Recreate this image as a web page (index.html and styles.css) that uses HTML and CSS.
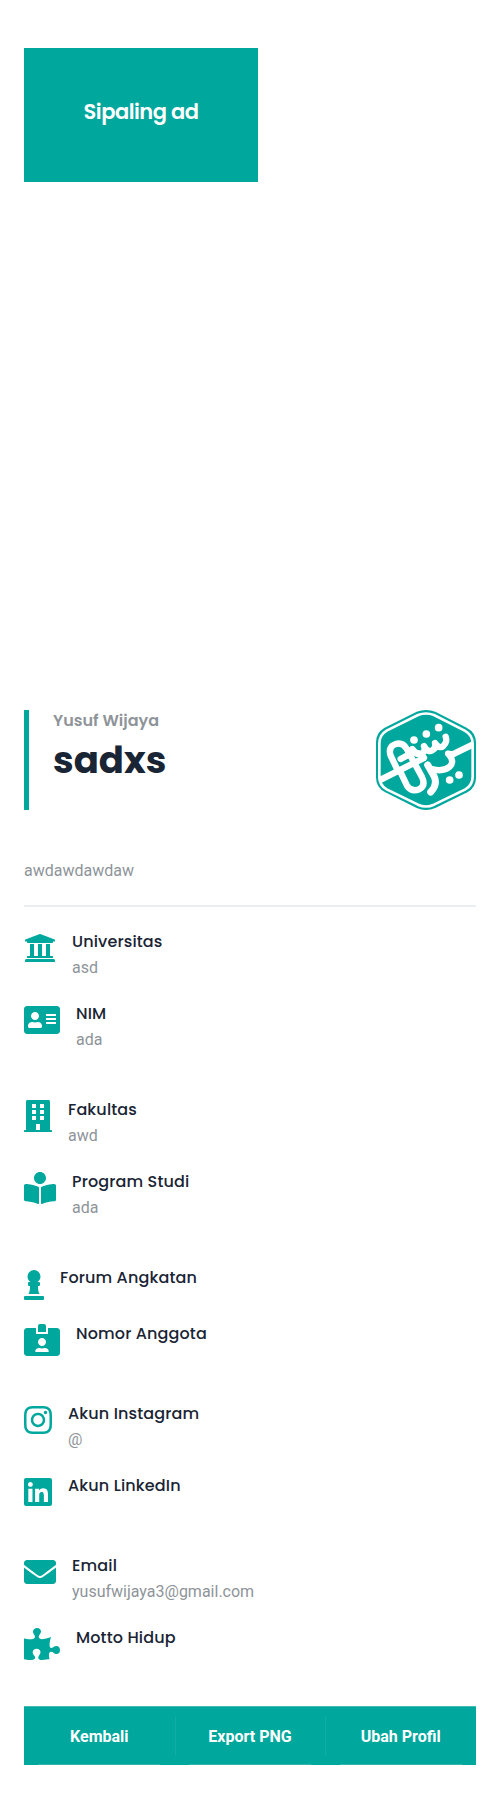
FILE: index.html
```html
<!DOCTYPE html>
<html lang="id"><head><meta charset="utf-8"><title>Profil</title><link rel="stylesheet" href="styles.css"></head>
<body>
<main class="page">
<div class="photo"><span>Sipaling ad</span></div>
<header class="profile">
<div class="identity"><p class="name">Yusuf Wijaya</p><h1 class="nick">sadxs</h1></div>
<svg class="logo" viewBox="48 29 300 300">
<path fill="#00a79d" d="M170 34Q198 24 226 34L320 82Q348 97 348 126V232Q348 261 322 276L226 323Q198 335 170 323L76 276Q48 261 48 232V126Q48 97 74 82Z"/>
<path fill="none" stroke="#fff" stroke-width="8" d="M174 44Q198 35 222 44L314 91Q338 104 338 130V229Q338 254 316 267L222 313Q198 324 174 313L80 267Q58 254 58 229V130Q58 104 80 91Z"/>
<g fill="none" stroke="#fff" stroke-width="19" stroke-linecap="round" stroke-linejoin="round">
<path stroke-linecap="butt" d="M58 240L194 172"/>
<path d="M112 208L92 166Q84 141 103 133Q126 123 139 144L186 230Q198 256 178 267Q154 276 141 256L122 216"/>
<path d="M122 176L152 160Q175 150 192 172"/>
<path d="M157 146Q170 167 186 159Q199 151 192 137Q204 158 217 150Q230 143 225 128Q238 147 250 137Q263 125 257 109"/>
<path stroke-width="21" d="M203 194L222 227Q234 252 212 275"/>
<path stroke-linecap="butt" d="M338 133L278 162"/>
<path d="M278 162L264 160Q286 183 269 199Q250 216 215 206"/>
</g>
<g fill="#fff"><circle cx="162" cy="119" r="11.500"/><circle cx="199" cy="101" r="11.500"/><circle cx="236" cy="82" r="11.500"/><circle cx="269" cy="239" r="11.500"/><circle cx="297" cy="224" r="11.500"/></g>
</svg>
</header>
<p class="bio">awdawdawdaw</p>
<section class="groups">
<div class="group">
<div class="item"><svg class="w32" viewBox="0 0 512 512"><path d="M496 128v16a8 8 0 0 1-8 8h-24v12c0 6.627-5.373 12-12 12H60c-6.627 0-12-5.373-12-12v-12H24a8 8 0 0 1-8-8v-16a8 8 0 0 1 4.941-7.392l232-88a7.996 7.996 0 0 1 6.118 0l232 88A8 8 0 0 1 496 128zm-24 304H40c-13.255 0-24 10.745-24 24v16a8 8 0 0 0 8 8h464a8 8 0 0 0 8-8v-16c0-13.255-10.745-24-24-24zM96 192v192H60c-6.627 0-12 5.373-12 12v20h416v-20c0-6.627-5.373-12-12-12h-36V192h-64v192h-64V192h-64v192h-64V192H96z"/></svg><div><h2>Universitas</h2><p>asd</p></div></div>
<div class="item"><svg class="w36" viewBox="0 0 576 512"><path d="M528 32H48C21.500 32 0 53.500 0 80v352c0 26.500 21.500 48 48 48h480c26.500 0 48-21.500 48-48V80c0-26.500-21.500-48-48-48zm-352 96c35.300 0 64 28.700 64 64s-28.700 64-64 64-64-28.700-64-64 28.700-64 64-64zm112 236.800c0 10.600-10 19.200-22.400 19.200H86.400C74 384 64 375.400 64 364.800v-19.200c0-31.800 30.100-57.600 67.200-57.600h5c12.300 5.100 25.700 8 39.800 8s27.600-2.900 39.800-8h5c37.100 0 67.200 25.800 67.200 57.600v19.200zM352 288v32h160v-32zM352 224v32h160v-32zM352 160v32h160v-32z" fill-rule="evenodd"/></svg><div><h2>NIM</h2><p>ada</p></div></div>
</div>
<div class="group">
<div class="item"><svg class="w28" viewBox="0 0 448 512"><path fill-rule="evenodd" d="M436 480h-20V24c0-13.255-10.745-24-24-24H56C42.745 0 32 10.745 32 24v456H12c-6.627 0-12 5.373-12 12v20h448v-20c0-6.627-5.373-12-12-12zM128 64h64v64h-64zM256 64h64v64h-64zM128 160h64v64h-64zM256 160h64v64h-64zM128 256h64v64h-64zM256 256h64v64h-64zM192 384h64v96h-64z"/></svg><div><h2>Fakultas</h2><p>awd</p></div></div>
<div class="item"><svg class="w32" viewBox="0 0 512 512"><path d="M352 96c0-53.020-42.980-96-96-96s-96 42.980-96 96 42.980 96 96 96 96-42.980 96-96zM233.590 241.100c-59.330-36.320-155.430-46.300-203.790-49.050C13.550 191.130 0 203.510 0 219.140v222.800c0 14.330 11.590 26.280 26.490 27.050 43.660 2.290 131.990 10.680 193.040 41.430 9.370 4.720 20.480-1.710 20.480-11.870V252.560c-.010-4.670-2.320-8.950-6.420-11.460zm248.610-49.050c-48.350 2.740-144.460 12.730-203.780 49.050-4.100 2.510-6.410 6.960-6.410 11.630v245.790c0 10.190 11.140 16.630 20.540 11.900 61.040-30.720 149.320-39.110 192.970-41.400 14.900-.780 26.490-12.730 26.490-27.060V219.140c-.010-15.630-13.560-28.010-29.810-27.090z"/></svg><div><h2>Program Studi</h2><p>ada</p></div></div>
</div>
<div class="group">
<div class="item"><svg class="w20" viewBox="0 0 320 512"><path d="M105.100 224H80a16 16 0 0 0-16 16v32a16 16 0 0 0 16 16h16v5.490c0 44-4.140 86.600-24 122.510h176c-19.890-35.910-24-78.510-24-122.510V288h16a16 16 0 0 0 16-16v-32a16 16 0 0 0-16-16h-25.100c29.390-18.380 49.100-50.780 49.100-88a104 104 0 0 0-208 0c0 37.220 19.710 69.620 49.100 88zM304 448H16a16 16 0 0 0-16 16v32a16 16 0 0 0 16 16h288a16 16 0 0 0 16-16v-32a16 16 0 0 0-16-16z"/></svg><div><h2>Forum Angkatan</h2></div></div>
<div class="item"><svg class="w36" viewBox="0 0 576 512"><path d="M528 64H384v96H192V64H48C21.500 64 0 85.500 0 112v352c0 26.500 21.500 48 48 48h480c26.500 0 48-21.500 48-48V112c0-26.500-21.500-48-48-48zM288 224c35.300 0 64 28.700 64 64s-28.700 64-64 64-64-28.700-64-64 28.700-64 64-64zm93.300 224H194.700c-10.400 0-18.800-10-15.600-19.800 8.300-25.600 32.400-44.200 60.900-44.200h8.200c12.300 5.100 25.700 8 39.800 8s27.600-2.900 39.800-8h8.200c28.400 0 52.500 18.500 60.900 44.200 3.200 9.900-5.200 19.800-15.600 19.800zM352 32c0-17.700-14.300-32-32-32h-64c-17.700 0-32 14.300-32 32v96h128V32z"/></svg><div><h2>Nomor Anggota</h2></div></div>
</div>
<div class="group">
<div class="item"><svg class="w28" viewBox="0 0 448 512"><path d="M224.100 141c-63.600 0-114.900 51.300-114.900 114.900s51.300 114.900 114.900 114.900S339 319.500 339 255.900 287.700 141 224.100 141zm0 189.600c-41.100 0-74.700-33.500-74.700-74.700s33.500-74.700 74.700-74.700 74.700 33.500 74.700 74.700-33.600 74.700-74.700 74.700zm146.400-194.300c0 14.900-12 26.800-26.800 26.800-14.900 0-26.800-12-26.800-26.800s12-26.800 26.800-26.800 26.800 12 26.800 26.800zm76.100 27.200c-1.700-35.900-9.900-67.700-36.200-93.900-26.200-26.200-58-34.400-93.900-36.200-37-2.100-147.900-2.100-184.900 0-35.800 1.700-67.600 9.900-93.900 36.100s-34.400 58-36.200 93.900c-2.100 37-2.100 147.900 0 184.900 1.700 35.900 9.900 67.700 36.200 93.900s58 34.400 93.900 36.200c37 2.100 147.900 2.100 184.900 0 35.900-1.700 67.700-9.900 93.900-36.200 26.200-26.200 34.400-58 36.200-93.900 2.100-37 2.100-147.800 0-184.800zM398.800 388c-7.800 19.600-22.900 34.700-42.600 42.600-29.500 11.700-99.500 9-132.100 9s-102.700 2.600-132.100-9c-19.600-7.800-34.700-22.900-42.600-42.600-11.700-29.500-9-99.500-9-132.100s-2.600-102.700 9-132.100c7.800-19.600 22.900-34.700 42.600-42.600 29.500-11.700 99.500-9 132.100-9s102.700-2.600 132.100 9c19.600 7.800 34.700 22.900 42.600 42.600 11.700 29.500 9 99.500 9 132.100s2.700 102.700-9 132.100z"/></svg><div><h2>Akun Instagram</h2><p>@</p></div></div>
<div class="item"><svg class="w28" viewBox="0 0 448 512"><path d="M416 32H31.900C14.300 32 0 46.500 0 64.300v383.400C0 465.500 14.300 480 31.900 480H416c17.600 0 32-14.500 32-32.300V64.300c0-17.800-14.400-32.300-32-32.300zM135.400 416H69V202.200h66.500V416zm-33.200-243c-21.300 0-38.500-17.300-38.500-38.500S80.900 96 102.200 96c21.200 0 38.500 17.300 38.500 38.500 0 21.300-17.200 38.500-38.500 38.500zm282.100 243h-66.400V312c0-24.800-.5-56.700-34.500-56.700-34.600 0-39.900 27-39.900 54.900V416h-66.400V202.200h63.700v29.200h.9c8.900-16.800 30.600-34.500 62.900-34.500 67.200 0 79.700 44.300 79.700 101.900V416z"/></svg><div><h2>Akun LinkedIn</h2></div></div>
</div>
<div class="group">
<div class="item"><svg class="w32" viewBox="0 0 512 512"><path d="M502.300 190.800c3.900-3.100 9.700-.2 9.700 4.700V400c0 26.500-21.500 48-48 48H48c-26.500 0-48-21.500-48-48V195.600c0-5 5.700-7.800 9.700-4.700 22.400 17.400 52.100 39.500 154.100 113.600 21.100 15.400 56.700 47.800 92.200 47.600 35.700.3 72-32.800 92.300-47.600 102-74.100 131.600-96.300 154-113.700zM256 320c23.200.4 56.600-29.200 73.400-41.400 132.700-96.300 142.800-104.700 173.400-128.700 5.800-4.500 9.200-11.500 9.200-18.900v-19c0-26.500-21.500-48-48-48H48c-26.500 0-48 21.500-48 48v19c0 7.400 3.400 14.300 9.200 18.900 30.600 23.900 40.700 32.400 173.400 128.700 16.800 12.200 50.200 41.800 73.400 41.400z"/></svg><div><h2>Email</h2><p>yusufwijaya3@gmail.com</p></div></div>
<div class="item"><svg class="w36" viewBox="0 0 576 512"><path d="M519.442 288.651c-41.519 0-59.500 31.593-82.058 31.593C377.409 320.244 432 144 432 144s-196.288 80-196.288-3.297c0-35.827 36.288-46.250 36.288-85.985C272 19.216 243.885 0 210.539 0c-34.654 0-66.366 18.891-66.366 56.346 0 41.364 31.711 59.277 31.711 81.750C175.885 207.719 0 166.758 0 166.758v333.237s178.635 41.047 178.635-28.662c0-22.473-40-40.107-40-81.471 0-37.456 29.250-56.346 63.577-56.346 33.673 0 61.788 19.216 61.788 54.717 0 39.735-36.288 50.158-36.288 85.985 0 60.803 129.675 25.730 181.230 25.730 0 0-34.725-120.101 25.827-120.101 35.962 0 46.423 36.152 86.308 36.152C556.712 416 576 387.990 576 354.443c0-34.199-18.962-65.792-56.558-65.792z"/></svg><div><h2>Motto Hidup</h2></div></div>
</div>
</section>
<nav class="actions"><a>Kembali</a><a>Export PNG</a><a>Ubah Profil</a></nav>
</main>
</body></html>
```
FILE: styles.css
```css
*{box-sizing:border-box}
body{margin:0;background:#fff;font-family:Roboto,sans-serif;font-size:16px;color:#8e9499}
h1,h2,p{margin:0}
.page{padding:48px 24px 0;height:1813px}
.photo{width:234px;height:134px;background:#00a79d;color:#fff;display:flex;align-items:center;justify-content:center;font:600 21px/30px Poppins,Inter,sans-serif;letter-spacing:-.5px;padding-bottom:7px}
.profile{display:flex;justify-content:space-between;margin-top:528px;height:100px}
.identity{border-left:5px solid #00a79d;padding-left:24px}
.name{font:600 16px/22px Poppins,Inter,sans-serif}
.nick{font:700 37px/57px Poppins,Inter,sans-serif;color:#192434}
.logo{width:100px;height:100px}
.bio{margin-top:48px;height:49px;padding-top:1px;line-height:24px;border-bottom:2px solid #e9eef2}
.groups{display:flex;flex-direction:column;gap:40px;margin-top:25px}
.group{display:flex;flex-direction:column;gap:16px}
.item{display:flex;gap:16px;min-height:40px}
.item svg{height:32px;fill:#00a79d;flex:none}
.w20{width:20px}.w28{width:28px}.w32{width:32px}.w36{width:36px}
.item h2{font:500 16px/20px Poppins,Inter,sans-serif;letter-spacing:.14px;color:#192434}
.item p{line-height:24px;height:36px;padding-top:4px}
.actions{display:grid;grid-template-columns:repeat(3,1fr);margin-top:38px;height:59px;background:#00a79d;border-top:1px solid #40bdb6}
.actions a{display:flex;align-items:center;justify-content:center;color:#fff;font-weight:700;background:linear-gradient(#33b5ac,#33b5ac) 50% 100%/122px 1px no-repeat}
.actions a+a{background:linear-gradient(#33b5ac,#33b5ac) 50% 100%/122px 1px no-repeat,linear-gradient(#12ada4,#12ada4) 0 50%/1px 38px no-repeat}
```
